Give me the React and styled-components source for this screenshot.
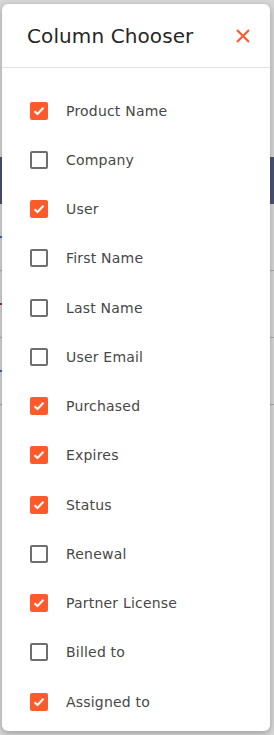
import React, { useState } from 'react'
import { styled, createGlobalStyle } from 'styled-components'

const GlobalStyle = createGlobalStyle`
  html, body {
    margin: 0;
    padding: 0;
  }
  body {
    font-family: 'DejaVu Sans', sans-serif;
    background: #ffffff;
  }
`

const Page = styled.div`
  position: relative;
  width: 274px;
  height: 735px;
  overflow: hidden;
  background: #ffffff;
`

const Underlay = styled.div`
  display: flex;
  flex-direction: column;
  padding-top: 157px;
`

const Band = styled.div`
  height: 47px;
  background: #5a6285;
`

const TableRow = styled.div`
  height: 66px;
  border-bottom: 1px solid #c8c8c8;
  display: flex;
  align-items: center;
`

const Mark = styled.span`
  display: block;
  width: 4px;
  height: 2px;
  background: ${(p) => p.$color};
`

const Backdrop = styled.div`
  position: absolute;
  inset: 0;
  background: rgba(0, 0, 0, 0.16);
`

const Dialog = styled.div`
  position: absolute;
  top: 4px;
  left: 2px;
  width: 268px;
  height: 727px;
  background: #ffffff;
  border-radius: 6px;
  box-shadow: 0 2px 6px rgba(0, 0, 0, 0.28);
  display: flex;
  flex-direction: column;
`

const Header = styled.div`
  height: 64px;
  box-sizing: border-box;
  padding: 0 19px 0 25px;
  display: flex;
  align-items: center;
  justify-content: space-between;
  border-bottom: 1px solid #e2e2e2;
`

const Title = styled.h2`
  margin: 0;
  font-size: 20px;
  font-weight: 400;
  color: #262626;
  letter-spacing: 0.1px;
`

const CloseButton = styled.button`
  border: 0;
  background: none;
  padding: 0;
  width: 16px;
  height: 16px;
  display: flex;
  align-items: center;
  justify-content: center;
  cursor: pointer;
`

const List = styled.div`
  display: flex;
  flex-direction: column;
  padding: 18px 0 0 28px;
`

const Row = styled.label`
  height: 49.25px;
  display: flex;
  align-items: center;
  gap: 18px;
  cursor: pointer;
`

const Box = styled.span`
  width: 18px;
  height: 18px;
  box-sizing: border-box;
  border-radius: 2px;
  display: flex;
  align-items: center;
  justify-content: center;
  background: ${(p) => (p.$checked ? '#ff5a2c' : '#ffffff')};
  border: ${(p) => (p.$checked ? 'none' : '2px solid #6e6e6e')};
`

const Label = styled.span`
  font-size: 14px;
  letter-spacing: 0.2px;
  color: #474747;
`

const columns = [
  ['Product Name', true],
  ['Company', false],
  ['User', true],
  ['First Name', false],
  ['Last Name', false],
  ['User Email', false],
  ['Purchased', true],
  ['Expires', true],
  ['Status', true],
  ['Renewal', false],
  ['Partner License', true],
  ['Billed to', false],
  ['Assigned to', true]
]

const App = () => {
  const [checked, setChecked] = useState(columns.map((c) => c[1]))

  return (
    <Page>
      <GlobalStyle />
      <Underlay>
        <Band />
        <TableRow>
          <Mark $color='#3a7bd5' />
        </TableRow>
        <TableRow>
          <Mark $color='#b0413e' />
        </TableRow>
        <TableRow>
          <Mark $color='#3a7bd5' />
        </TableRow>
      </Underlay>
      <Backdrop />
      <Dialog>
        <Header>
          <Title>Column Chooser</Title>
          <CloseButton aria-label='close'>
            <svg width='14' height='14' viewBox='0 0 14 14'>
              <path d='M1 1L13 13M13 1L1 13' stroke='#ff5a2c' strokeWidth='2.2' strokeLinecap='butt' />
            </svg>
          </CloseButton>
        </Header>
        <List>
          {columns.map(([name], i) => (
            <Row
              key={name}
              onClick={() => setChecked((prev) => prev.map((v, j) => (j === i ? !v : v)))}
            >
              <Box $checked={checked[i]}>
                {checked[i] && (
                  <svg width='12' height='10' viewBox='0 0 12 10'>
                    <path d='M1.5 5.2L4.5 8L10.5 1.8' fill='none' stroke='#ffffff' strokeWidth='2' />
                  </svg>
                )}
              </Box>
              <Label>{name}</Label>
            </Row>
          ))}
        </List>
      </Dialog>
    </Page>
  )
}

export default App
